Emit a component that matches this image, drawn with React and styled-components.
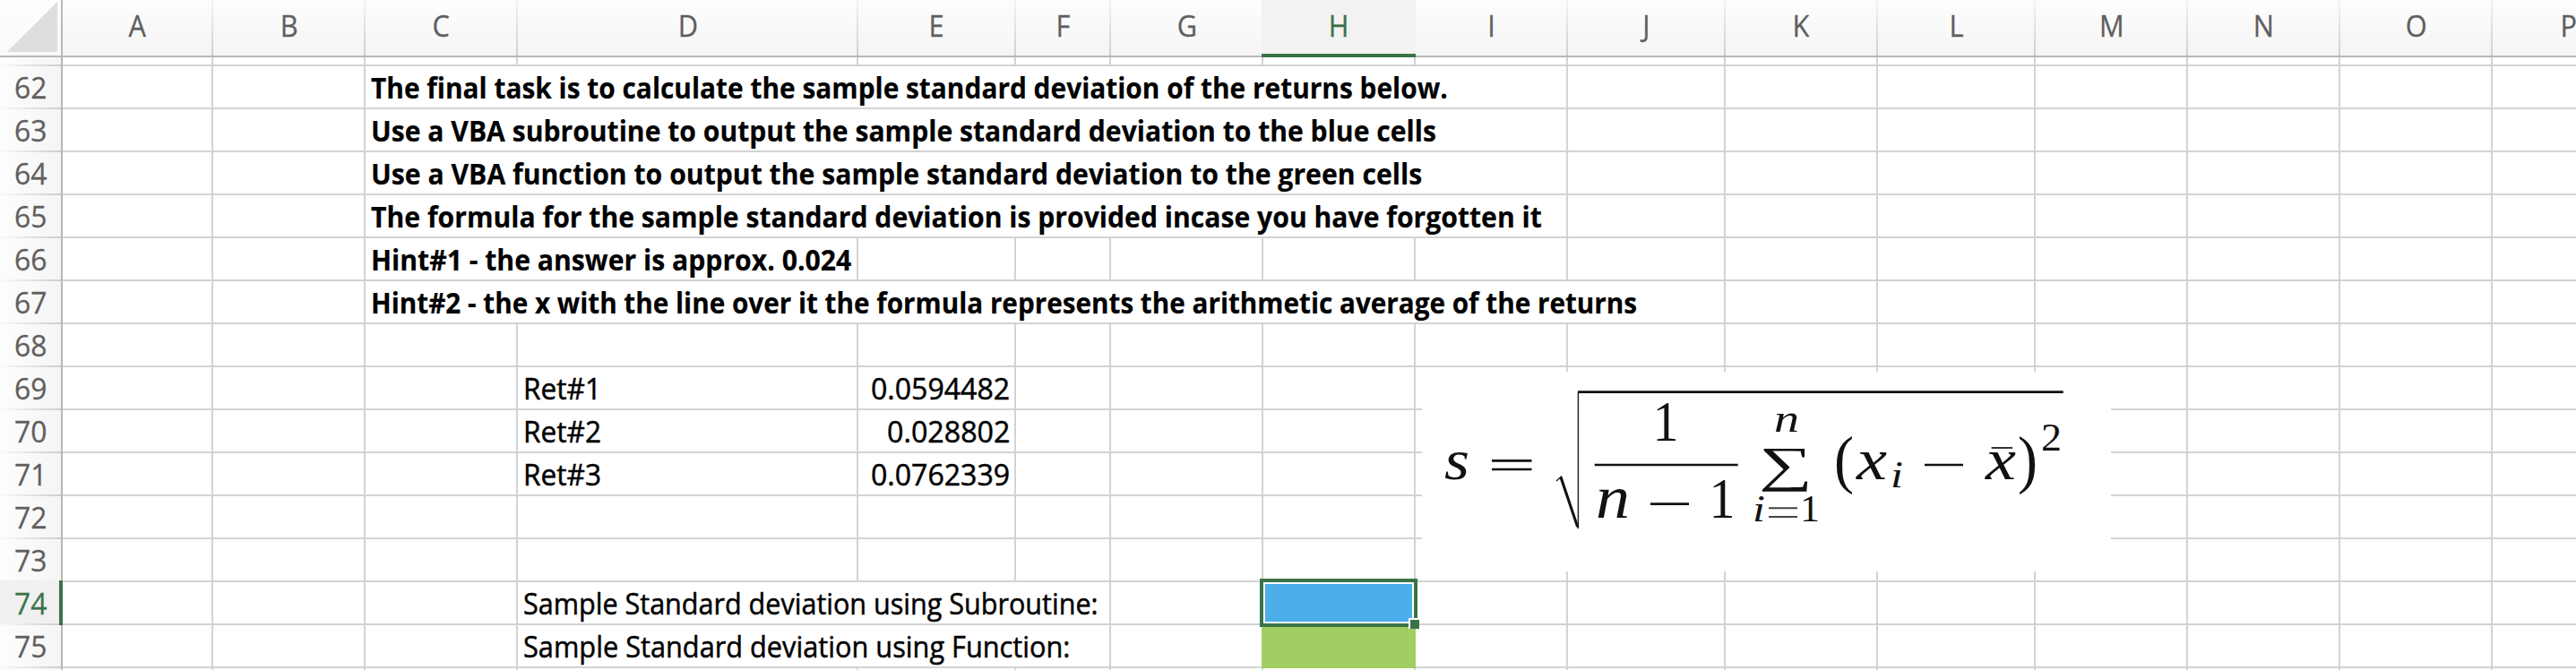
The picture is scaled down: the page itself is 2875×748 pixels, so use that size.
import React, { useLayoutEffect, useRef, useState } from "react";
import styled, { createGlobalStyle, css } from "styled-components";

const GlobalStyle = createGlobalStyle`
  * { box-sizing: border-box; }
  body { margin: 0; background: #fff; overflow: hidden; }
`;

const line = "#d3d3d3";
const edge = "#b7b7b7";
const accent = "#3b7349";

const columns = [
  ["A", 168], ["B", 170], ["C", 170], ["D", 380], ["E", 176], ["F", 106],
  ["G", 170], ["H", 170], ["I", 170], ["J", 176], ["K", 170], ["L", 176],
  ["M", 170], ["N", 170], ["O", 170], ["P", 170],
];

const template = `70px ${columns.map(([, w]) => `${w}px`).join(" ")}`;

/* Each entry: start column, number of columns covered, text, rendered width. */
const rows = [
  { id: 62, cells: [{ at: "C", span: 7, bold: true, width: 1202, text: "The final task is to calculate the sample standard deviation of the returns below." }] },
  { id: 63, cells: [{ at: "C", span: 7, bold: true, width: 1189, text: "Use a VBA subroutine to output the sample standard deviation to the blue cells" }] },
  { id: 64, cells: [{ at: "C", span: 7, bold: true, width: 1173, text: "Use a VBA function to output the sample standard deviation to the green cells" }] },
  { id: 65, cells: [{ at: "C", span: 7, bold: true, width: 1307, text: "The formula for the sample standard deviation is provided incase you have forgotten it" }] },
  { id: 66, cells: [{ at: "C", span: 2, bold: true, width: 536, text: "Hint#1 - the answer is approx. 0.024" }] },
  { id: 67, cells: [{ at: "C", span: 8, bold: true, width: 1413, text: "Hint#2 - the x with the line over it the formula represents the arithmetic average of the returns" }] },
  { id: 68, cells: [] },
  { id: 69, cells: [{ at: "D", width: 87, text: "Ret#1" }, { at: "E", right: true, width: 155, text: "0.0594482" }] },
  { id: 70, cells: [{ at: "D", width: 87, text: "Ret#2" }, { at: "E", right: true, width: 137, text: "0.028802" }] },
  { id: 71, cells: [{ at: "D", width: 87, text: "Ret#3" }, { at: "E", right: true, width: 155, text: "0.0762339" }] },
  { id: 72, cells: [] },
  { id: 73, cells: [] },
  { id: 74, active: true, cells: [{ at: "D", span: 3, width: 642, text: "Sample Standard deviation using Subroutine:" }, { at: "H", selected: true }] },
  { id: 75, cells: [{ at: "D", span: 3, width: 610, text: "Sample Standard deviation using Function:" }, { at: "H", green: true }] },
];

const Sheet = styled.main`
  position: relative;
  width: 100vw;
  height: 748px;
  overflow: hidden;
  background: #fff;
  color: #000;
  font: 32.7px/48px "Open Sans", "Noto Sans", sans-serif;
`;

const GridRow = styled.div`
  display: grid;
  grid-template-columns: ${template};
  grid-template-rows: 100%;
  height: ${(p) => p.$height || 48}px;
`;

const HeaderRow = styled(GridRow)`
  height: 64px;
`;

const Corner = styled.div`
  display: flex;
  justify-content: flex-end;
  padding: 2px 4px 0 0;
  background: linear-gradient(#fdfdfd, #fafafa);
  border-right: 2px solid ${edge};
  border-bottom: 2px solid ${edge};
`;

const ColumnHead = styled.div`
  display: flex;
  justify-content: center;
  padding: 5px 1px 0 0;
  color: #5f5f5f;
  border-bottom: 2px solid ${edge};
  -webkit-text-stroke: 0.3px currentColor;
  background:
    linear-gradient(#f4f4f4, #cfcfcf) right / 2px 100% no-repeat,
    linear-gradient(#fdfdfd, #f5f5f5);
  ${(p) => p.$active && css`
    margin-left: -2px;
    padding-right: 0;
    color: ${accent};
    border-bottom: 4px solid ${accent};
    background: #f2f2f2;
  `}
`;

const RowHead = styled.div`
  display: flex;
  justify-content: center;
  height: 100%;
  min-height: 0;
  color: #5f5f5f;
  border-right: 2px solid ${edge};
  -webkit-text-stroke: 0.3px currentColor;
  background:
    linear-gradient(90deg, #fafafa, #cdcdcd) bottom / 100% 2px no-repeat,
    linear-gradient(90deg, #fdfdfd, #f5f5f5);
  ${(p) => p.$active && css`
    position: relative;
    height: 50px;
    margin-top: -2px;
    padding: 2px 0 0 2px;
    color: ${accent};
    border-right: 4px solid ${accent};
    background:
      linear-gradient(90deg, #fafafa, #cdcdcd) bottom / 100% 2px no-repeat,
      #f0f0f0;
  `}
`;

const Cell = styled.div`
  position: relative;
  display: flex;
  justify-content: ${(p) => (p.$right ? "flex-end" : "flex-start")};
  grid-column: span ${(p) => p.$span || 1};
  min-width: 0;
  padding: 0 5px 0 6px;
  font-weight: ${(p) => (p.$bold ? 700 : 400)};
  -webkit-text-stroke: ${(p) => (p.$bold ? 0.2 : 0.5)}px currentColor;
  border-right: 2px solid ${line};
  border-bottom: 2px solid ${line};
  ${(p) => p.$green && css`
    z-index: 1;
    margin-left: -2px;
    background: #a0ce63;
    border-color: #a0ce63;
  `}
`;

const Selection = styled.div`
  position: absolute;
  z-index: 2;
  top: -4px;
  left: -4px;
  width: 176px;
  height: 54px;
  border: 4px solid ${accent};
  background: #4baeea;
  box-shadow: inset 0 0 0 2px #fff;
`;

const SelectedCell = styled(Cell)`
  z-index: 2;
`;

const FillHandle = styled.div`
  position: absolute;
  right: -6px;
  bottom: -6px;
  width: 12px;
  height: 12px;
  background: ${accent};
  border-top: 2px solid #fff;
  border-left: 2px solid #fff;
`;

const TextBox = styled.span`
  display: block;
  flex: none;
  width: ${(p) => p.$width}px;
  white-space: pre;
`;

const Stretch = styled.span`
  display: inline-block;
  transform-origin: 0 50%;
`;

function FitText({ width, children }) {
  const ref = useRef(null);
  const [scale, setScale] = useState(1);
  useLayoutEffect(() => {
    setScale(width / ref.current.offsetWidth);
  }, [width, children]);
  return (
    <TextBox $width={width}>
      <Stretch ref={ref} style={{ transform: `scaleX(${scale})` }}>{children}</Stretch>
    </TextBox>
  );
}

const Narrow = styled.span`
  display: inline-block;
  transform: scaleX(0.94);
`;

const Picture = styled.figure`
  position: absolute;
  z-index: 3;
  top: 415px;
  left: 1587px;
  width: 769px;
  height: 223px;
  margin: 0;
  background: #fff;
`;

const Formula = styled.svg`
  display: block;
  font-family: "Liberation Serif", serif;
  fill: #111;
`;

const Glyph = ({ x, y, size, w, italic, children }) => (
  <text
    x={x}
    y={y}
    fontSize={size}
    fontStyle={italic ? "italic" : "normal"}
    textLength={w}
    lengthAdjust="spacingAndGlyphs"
  >
    {children}
  </text>
);

function StandardDeviation() {
  return (
    <Picture>
      <Formula width="769" height="223" viewBox="0 0 769 223">
        <Glyph x={25} y={119.5} size={64} w={28} italic>s</Glyph>
        <path d="M78 99.3H122.5M78 109H122.5" stroke="#111" strokeWidth="2.7" />
        <path d="M150 122L155.5 117L174.4 175V22.7" fill="none" stroke="#222" strokeWidth="1.5" />
        <path d="M155 118L173.6 173" stroke="#111" strokeWidth="3" />
        <path d="M174 22.7H715.7" stroke="#111" strokeWidth="2.7" />
        <Glyph x={257.5} y={76.5} size={63} w={29}>1</Glyph>
        <path d="M192.7 104H352.7" stroke="#111" strokeWidth="2.7" />
        <Glyph x={194} y={163} size={68} w={38} italic>n</Glyph>
        <path d="M255 147.7H298" stroke="#111" strokeWidth="2.7" />
        <Glyph x={320.5} y={163} size={63} w={29}>1</Glyph>
        <Glyph x={393} y={66.5} size={44} w={28} italic>n</Glyph>
        <Glyph x={376} y={122} size={55} w={60}>∑</Glyph>
        <Glyph x={369} y={167} size={43} w={14} italic>i</Glyph>
        <path d="M387 152.3H419M387 162H419" stroke="#444" strokeWidth="2" />
        <Glyph x={422} y={167} size={43} w={22}>1</Glyph>
        <Glyph x={460} y={121.5} size={71} w={22}>(</Glyph>
        <Glyph x={485} y={119.5} size={65} w={34} italic>x</Glyph>
        <Glyph x={523} y={129} size={43} w={14} italic>i</Glyph>
        <path d="M561 104H604" stroke="#111" strokeWidth="2.7" />
        <Glyph x={629} y={119.5} size={65} w={34} italic>x</Glyph>
        <path d="M635.6 85H659" stroke="#333" strokeWidth="2" />
        <Glyph x={665} y={121.5} size={71} w={22}>)</Glyph>
        <Glyph x={691} y={88.3} size={45} w={23}>2</Glyph>
      </Formula>
    </Picture>
  );
}

function RowCells({ cells }) {
  const out = [];
  for (let i = 0; i < columns.length; i += 1) {
    const name = columns[i][0];
    const cell = cells.find((c) => c.at === name) || {};
    out.push(
      cell.selected ? (
        <SelectedCell key={name}>
          <Selection><FillHandle /></Selection>
        </SelectedCell>
      ) : (
        <Cell key={name} $span={cell.span} $bold={cell.bold} $right={cell.right} $green={cell.green}>
          {cell.text && <FitText width={cell.width}>{cell.text}</FitText>}
        </Cell>
      )
    );
    i += (cell.span || 1) - 1;
  }
  return out;
}

export default function App() {
  return (
    <>
      <GlobalStyle />
      <Sheet>
        <HeaderRow>
          <Corner>
            <svg width="56" height="56" viewBox="0 0 56 56">
              <path d="M56 0V56H0Z" fill="#dedede" />
            </svg>
          </Corner>
          {columns.map(([name]) => (
            <ColumnHead key={name} $active={name === "H"}><Narrow>{name}</Narrow></ColumnHead>
          ))}
        </HeaderRow>
        <GridRow $height={10}>
          <RowHead />
          <RowCells cells={[]} />
        </GridRow>
        {rows.map((row) => (
          <GridRow key={row.id}>
            <RowHead $active={row.active}><FitText width={36}>{row.id}</FitText></RowHead>
            <RowCells cells={row.cells} />
          </GridRow>
        ))}
        <GridRow>
          <RowHead />
          <RowCells cells={[]} />
        </GridRow>
        <StandardDeviation />
      </Sheet>
    </>
  );
}
